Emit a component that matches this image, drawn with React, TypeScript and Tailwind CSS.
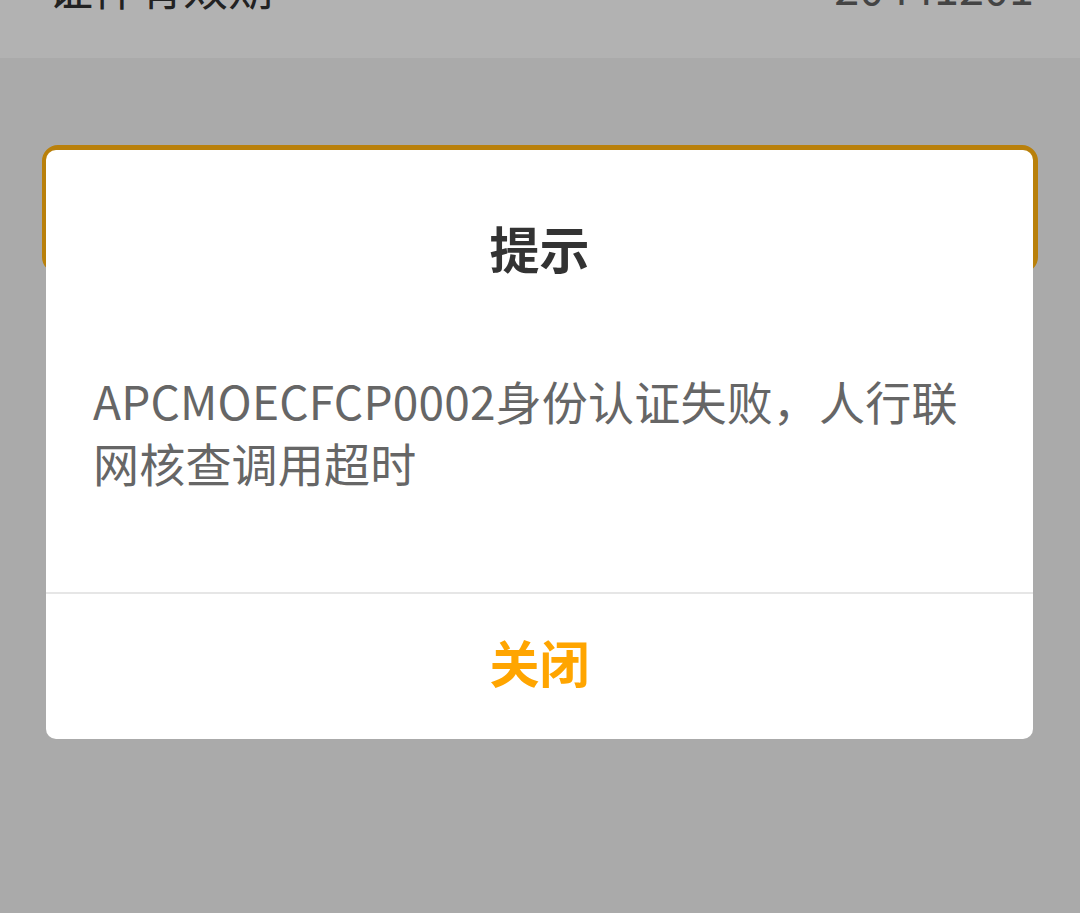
import React from 'react'

const font = { fontFamily: '"Noto Sans CJK SC", "Noto Sans", sans-serif' }

export default function App() {
  return (
    <div className="relative w-[1080px] h-[913px] overflow-hidden bg-[#aaaaaa]" style={font}>
      {/* 页面（遮罩下） */}
      <div className="h-[58px] bg-[#b2b2b2] px-[48px] flex justify-between items-start overflow-hidden">
        <span className="text-[45px] leading-none text-[#222222] -mt-[36px]">证件有效期</span>
        <span className="text-[45px] leading-none text-[#444444] -mt-[37px] mr-[-2px]">20441201</span>
      </div>
      <div className="px-[42px] pt-[87px]">
        <div className="h-[128px] rounded-[16px] border-[6px] border-[#b9800b] bg-[#b9800b]" />
      </div>

      {/* 弹窗 */}
      <div className="absolute left-[46px] top-[150px] w-[987px] bg-white rounded-[10px] flex flex-col">
        <div className="pt-[62px] text-center text-[50px] leading-[70px] font-bold text-[#333333]">
          提示
        </div>
        <div className="pt-[87px] pb-[99px] pl-[47px] pr-[56px] text-[46px] leading-[62px] text-[#666666] tracking-[0.2px]">
          APCMOECFCP0002身份认证失败，人行联网核查调用超时
        </div>
        <div className="h-[2px] bg-[#e6e6e6]" />
        <div className="h-[145px] pb-[10px] flex items-center justify-center text-[50px] font-bold text-[#ffa500]">
          关闭
        </div>
      </div>
    </div>
  )
}
